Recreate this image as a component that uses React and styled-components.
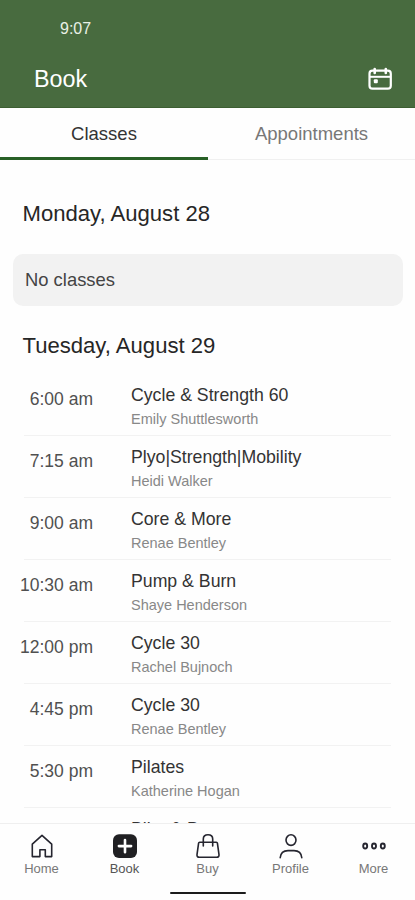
import styled, { createGlobalStyle } from "styled-components";

const GlobalStyle = createGlobalStyle`
  * {
    margin: 0;
    padding: 0;
    box-sizing: border-box;
  }

  body {
    font-family: "Liberation Sans", Arial, sans-serif;
    background-color: #fff;
    overflow: hidden;
  }
`;

const Screen = styled.div`
  width: 415px;
  height: 900px;
  display: flex;
  flex-direction: column;
  background-color: #fefefe;
  overflow: hidden;
`;

const Header = styled.header`
  height: 108px;
  flex-shrink: 0;
  background-color: #486b3f;
  border-bottom: 1px solid #3c5e31;
  color: #fff;
`;

const StatusBar = styled.div`
  height: 56px;
  padding-left: 60px;
  font-size: 16px;
  line-height: 57px;
  color: #e9f1e6;
`;

const TitleBar = styled.div`
  height: 46px;
  padding: 0 22px 0 34px;
  display: flex;
  align-items: center;
  justify-content: space-between;
`;

const Title = styled.h1`
  font-size: 23.3px;
  font-weight: 400;
  line-height: 46px;
`;

const Tabs = styled.nav`
  height: 52px;
  flex-shrink: 0;
  display: flex;
`;

const Tab = styled.button`
  width: ${({ $active }) => ($active ? "208px" : "207px")};
  border: none;
  border-bottom: ${({ $active }) =>
    $active ? "3px solid #286026" : "1px solid #f0f0f0"};
  background: none;
  font-family: inherit;
  font-size: 18.5px;
  line-height: 21px;
  padding: ${({ $active }) => ($active ? "2px 0 0" : "0")};
  color: ${({ $active }) => ($active ? "#333" : "#777")};
`;

const Schedule = styled.main`
  flex: 1;
  min-height: 0;
  overflow: hidden;
`;

const DayTitle = styled.h2`
  padding-left: 22.5px;
  font-size: 22.1px;
  font-weight: 400;
  line-height: 26px;
  color: #262626;
  margin-top: ${({ $top }) => $top}px;
`;

const EmptyCard = styled.div`
  height: 52px;
  margin: 27px 12px 0 13px;
  padding-left: 12px;
  border-radius: 10px;
  background-color: #f2f2f2;
  font-size: 18.4px;
  line-height: 52px;
  color: #444;
`;

const ClassList = styled.ul`
  list-style: none;
  margin: 15px 24px 0;
`;

const ClassRow = styled.li`
  height: 62px;
  display: flex;
  border-bottom: 1px solid #f2f2f2;
`;

const Time = styled.span`
  width: 73px;
  margin-left: -4px;
  padding-top: 15px;
  font-size: 17.5px;
  line-height: 21px;
  text-align: right;
  white-space: nowrap;
  color: #505050;
`;

const ClassInfo = styled.div`
  padding: 11px 0 0 38px;
`;

const ClassName = styled.p`
  font-size: 17.7px;
  line-height: 21px;
  color: #333;
`;

const Instructor = styled.p`
  margin-top: 5px;
  font-size: 14.5px;
  line-height: 17px;
  color: #888;
`;

const BottomNav = styled.footer`
  height: 77px;
  flex-shrink: 0;
  border-top: 1px solid #efefef;
  background-color: #fefefe;
  display: flex;
  flex-direction: column;
  align-items: center;
`;

const NavItems = styled.div`
  width: 100%;
  display: grid;
  grid-template-columns: repeat(5, 1fr);
`;

const NavItem = styled.a`
  padding-top: 8px;
  display: flex;
  flex-direction: column;
  align-items: center;
  font-size: 13px;
  line-height: 15px;
  color: ${({ $active }) => ($active ? "#555" : "#777")};

  svg {
    margin-bottom: 1px;
  }
`;

const HomeIndicator = styled.div`
  width: 76px;
  height: 2px;
  margin-top: 16px;
  border-radius: 2px;
  background-color: #1c1c1c;
`;

const Svg = ({ children, ...rest }) => (
  <svg
    width="28"
    height="28"
    viewBox="0 0 28 28"
    fill="none"
    stroke="#25252f"
    strokeWidth="1.6"
    strokeLinejoin="round"
    strokeLinecap="round"
    {...rest}
  >
    {children}
  </svg>
);

const CalendarIcon = () => (
  <svg width="26" height="24" viewBox="0 0 26 24" fill="none" stroke="#fff">
    <rect x="2.5" y="3.7" width="21.3" height="18" rx="3" strokeWidth="2.2" />
    <path d="M3 9.8h21" strokeWidth="2" />
    <path d="M7.7 2v4M18.8 2v4" strokeWidth="2.6" strokeLinecap="round" />
    <rect x="6.8" y="12.2" width="4" height="4" rx="1" fill="#fff" stroke="none" />
  </svg>
);

const HomeIcon = () => (
  <Svg>
    <path d="M4.3 12.2 14 3.3l9.7 8.9V24.6h-6.4v-6.8h-5.4v6.8H4.3z" />
  </Svg>
);

const BookIcon = () => (
  <Svg>
    <rect x="2" y="2.3" width="24" height="23.6" rx="6" fill="#202023" stroke="none" />
    <path d="M14 8v12.2M7.9 14.1h12.2" stroke="#fff" strokeWidth="2.6" />
  </Svg>
);

const BuyIcon = () => (
  <Svg>
    <path d="M5.7 10.2h16.6c.6 0 1 .3 1.1.9L25 22.7c.2 1.6-.7 2.6-2.3 2.6H5.3C3.7 25.3 2.8 24.3 3 22.7l1.6-11.6c.1-.6.5-.9 1.1-.9z" />
    <path d="M9.3 14V7c0-2.6 1.9-4.3 4.7-4.3S18.7 4.400 18.7 7v7" />
  </Svg>
);

const ProfileIcon = () => (
  <Svg>
    <ellipse cx="14" cy="8.100" rx="5" ry="5.300" />
    <path d="M3.200 25.800c.4-4.7 3.300-7.200 7.800-7.200h6c4.500 0 7.400 2.500 7.800 7.200" />
  </Svg>
);

const MoreIcon = () => (
  <Svg strokeWidth="1.9">
    <ellipse cx="5.2" cy="14" rx="2" ry="2.5" />
    <ellipse cx="14" cy="14" rx="2" ry="2.5" />
    <ellipse cx="22.8" cy="14" rx="2" ry="2.5" />
  </Svg>
);

const classes = [
  { time: "6:00 am", name: "Cycle & Strength 60", instructor: "Emily Shuttlesworth" },
  { time: "7:15 am", name: "Plyo|Strength|Mobility", instructor: "Heidi Walker" },
  { time: "9:00 am", name: "Core & More", instructor: "Renae Bentley" },
  { time: "10:30 am", name: "Pump & Burn", instructor: "Shaye Henderson" },
  { time: "12:00 pm", name: "Cycle 30", instructor: "Rachel Bujnoch" },
  { time: "4:45 pm", name: "Cycle 30", instructor: "Renae Bentley" },
  { time: "5:30 pm", name: "Pilates", instructor: "Katherine Hogan" },
  { time: "", name: "Bike & Burn", instructor: "" },
];

const navItems = [
  { label: "Home", Icon: HomeIcon },
  { label: "Book", Icon: BookIcon, active: true },
  { label: "Buy", Icon: BuyIcon },
  { label: "Profile", Icon: ProfileIcon },
  { label: "More", Icon: MoreIcon },
];

function App() {
  return (
    <>
      <Screen>
        <Header>
          <StatusBar>9:07</StatusBar>
          <TitleBar>
            <Title>Book</Title>
            <CalendarIcon />
          </TitleBar>
        </Header>

        <Tabs>
          <Tab $active>Classes</Tab>
          <Tab>Appointments</Tab>
        </Tabs>

        <Schedule>
          <DayTitle $top={41}>Monday, August 28</DayTitle>
          <EmptyCard>No classes</EmptyCard>
          <DayTitle $top={27}>Tuesday, August 29</DayTitle>
          <ClassList>
            {classes.map((item, index) => (
              <ClassRow key={index}>
                <Time>{item.time}</Time>
                <ClassInfo>
                  <ClassName>{item.name}</ClassName>
                  <Instructor>{item.instructor}</Instructor>
                </ClassInfo>
              </ClassRow>
            ))}
          </ClassList>
        </Schedule>

        <BottomNav>
          <NavItems>
            {navItems.map(({ label, Icon, active }) => (
              <NavItem key={label} $active={active}>
                <Icon />
                {label}
              </NavItem>
            ))}
          </NavItems>
          <HomeIndicator />
        </BottomNav>
      </Screen>
      <GlobalStyle />
    </>
  );
}

export default App;
